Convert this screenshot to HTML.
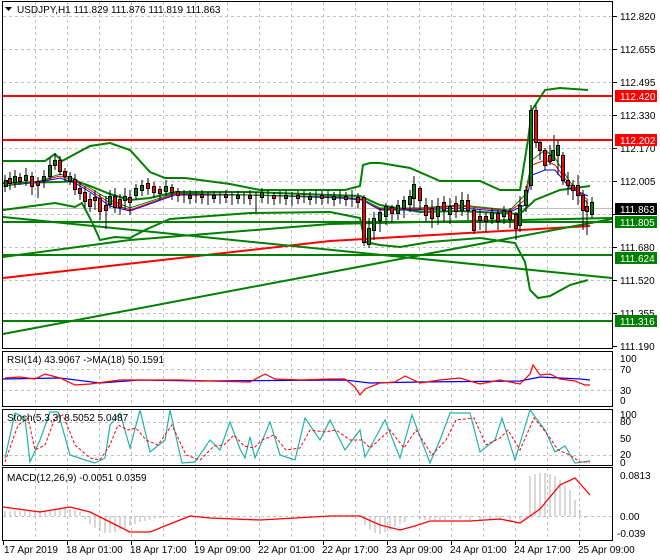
<!DOCTYPE html>
<html><head><meta charset="utf-8"><style>
html,body{margin:0;padding:0;background:#fff;}
svg{display:block;font-family:"Liberation Sans",sans-serif;}
</style></head><body>
<svg width="660" height="560" viewBox="0 0 660 560" xmlns="http://www.w3.org/2000/svg">
<rect width="660" height="560" fill="#fff"/>
<g fill="none" stroke="#000" stroke-width="1">
<rect x="2.5" y="1.5" width="610" height="347"/>
<rect x="2.5" y="351.5" width="610" height="55"/>
<rect x="2.5" y="409.5" width="610" height="56"/>
<rect x="2.5" y="467.5" width="610" height="73"/>
</g>
<g stroke="#c0c0c0" stroke-dasharray="3,3" stroke-width="1">
<path d="M35.5 2V348M67.5 2V348M99.5 2V348M131.5 2V348M163.5 2V348M195.5 2V348M227.5 2V348M259.5 2V348M291.5 2V348M323.5 2V348M355.5 2V348M387.5 2V348M419.5 2V348M451.5 2V348M483.5 2V348M515.5 2V348M547.5 2V348M579.5 2V348"/>
<path d="M3 16.5H612M3 49.5H612M3 82.5H612M3 115.5H612M3 148.5H612M3 181.5H612M3 214.5H612M3 247.5H612M3 280.5H612M3 313.5H612"/>
<path d="M35.5 352V406M67.5 352V406M99.5 352V406M131.5 352V406M163.5 352V406M195.5 352V406M227.5 352V406M259.5 352V406M291.5 352V406M323.5 352V406M355.5 352V406M387.5 352V406M419.5 352V406M451.5 352V406M483.5 352V406M515.5 352V406M547.5 352V406M579.5 352V406"/>
<path d="M3 369.5H612M3 390.5H612"/>
<path d="M35.5 410V465M67.5 410V465M99.5 410V465M131.5 410V465M163.5 410V465M195.5 410V465M227.5 410V465M259.5 410V465M291.5 410V465M323.5 410V465M355.5 410V465M387.5 410V465M419.5 410V465M451.5 410V465M483.5 410V465M515.5 410V465M547.5 410V465M579.5 410V465"/>
<path d="M3 422.5H612M3 455.5H612"/>
<path d="M35.5 468V540M67.5 468V540M99.5 468V540M131.5 468V540M163.5 468V540M195.5 468V540M227.5 468V540M259.5 468V540M291.5 468V540M323.5 468V540M355.5 468V540M387.5 468V540M419.5 468V540M451.5 468V540M483.5 468V540M515.5 468V540M547.5 468V540M579.5 468V540"/>
<path d="M3 516.5H612"/>
</g>
<path d="M3 208.5H612" stroke="#c0c0c0" stroke-width="1"/>
<g fill="none" stroke-width="2">
<path d="M3 96H612M3 140H612" stroke="#f00"/>
<path d="M3 278L330 241L590 226" stroke="#f00"/>
<path d="M3 255H612M3 321H612" stroke="#008000"/>
<path d="M3 222H612" stroke="#008000"/>
<path d="M3 217L612 278" stroke="#008000"/>
<path d="M3 334L612 219" stroke="#008000"/>
<path d="M3 257L130 240L330 224L612 218" stroke="#008000"/>
<path d="M3 161L45 161L55 154L62 161L90 146L110 143L130 150L150 172L165 178L185 178L230 184L260 190L290 190L345 190L360 186L363 165L370 163L380 163L410 168L440 181L480 181L500 190L520 190L528 140L532 110L545 90L560 88L588 90" stroke="#008000"/>
<path d="M3 183L60 182L75 181L90 186L110 194L130 200L150 198L175 192L250 192L330 195L360 196L380 205L420 212L460 211L500 213L520 214L535 200L560 190L590 186" stroke="#008000"/>
<path d="M3 210L40 205L55 203L75 207L82 203L92 222L100 240L115 237L130 238L145 230L170 219L250 213L330 212L360 218L365 242L380 245L400 247L430 242L480 238L515 243L525 262L530 290L538 298L550 296L570 285L588 280" stroke="#008000"/>
</g>
<g fill="none" stroke-width="1">
<path d="M3 186L40 182L60 178L75 183L90 192L110 206L130 211L175 195L250 195L340 198L362 200L380 210L420 210L460 208L510 212L525 205L532 175L545 170L555 170L570 188L588 196" stroke="#00f"/>
<path d="M3 186L40 181L60 176L75 181L90 190L110 203L130 210L175 194L250 195L340 197L362 199L380 209L420 209L460 206L510 211L525 200L532 165L545 160L555 165L570 185L588 200" stroke="#f00"/>
<path d="M3 186L40 181L60 174L75 179L90 188L110 200L130 208L175 193L250 195L340 197L362 199L380 208L420 208L460 205L510 210L525 195L532 160L545 150L555 158L570 182L588 204" stroke="#008000"/>
</g>
<g stroke="#000" stroke-width="1" fill="none">
<path d="M5 175V192M10 172V190M15 170V188M20 173V185M26 168V186M32 172V195M38 177V198M44 170V188M50 158V180M55 153V170M60 156V175M65 168V182M70 172V185M75 174V195M80 182V200M85 186V208M90 193V212M95 190V210M100 194V220M106 196V229M110 190V208M115 188V213M120 194V215M125 188V210M130 190V215M136 184V200M142 180V196M148 178V195M154 182V198M160 186V200M166 180V196M172 184V200M178 188V202M184 190V203M190 190V204M196 191V203M202 190V204M208 192V205M214 191V203M220 192V204M226 190V203M232 192V205M238 191V204M244 192V204M250 190V205M256 192V212M262 188V203M268 190V204M274 192V205M280 191V204M286 190V205M292 192V206M298 191V204M304 190V203M310 192V205M316 190V204M322 191V205M328 190V204M334 192V206M340 190V204M346 192V206M352 190V207M358 193V208M364 195V246M369 218V248M374 212V240M380 208V232M386 203V225M392 205V222M398 200V220M404 196V218M410 190V212M414 176V208M420 186V210M426 198V222M432 200V228M438 198V225M444 196V222M450 198V224M456 196V218M462 192V216M468 194V220M474 208V234M480 210V230M486 212V232M492 208V224M498 210V230M504 206V224M510 208V228M516 212V240M520 196V232M526 186V212M531 105V190M536 105V148M540 140V160M545 148V170M550 145V165M554 135V160M558 140V175M563 152V185M568 172V195M573 180V200M578 175V205M583 190V230M587 200V235M592 197V218"/>
</g>
<g stroke="#000" stroke-width="1">
<g fill="#008000">
<rect x="13.5" y="176.5" width="3" height="6"/><rect x="24.5" y="175.5" width="3" height="5"/><rect x="42.5" y="176.5" width="3" height="4"/><rect x="48.5" y="165.5" width="3" height="11"/><rect x="53.5" y="160.5" width="3" height="5"/><rect x="108.5" y="196.5" width="3" height="8"/><rect x="123.5" y="196.5" width="3" height="4"/><rect x="134.5" y="188.5" width="3" height="7"/><rect x="140.5" y="185.5" width="3" height="5"/><rect x="164.5" y="186.5" width="3" height="5"/><rect x="188.5" y="195.5" width="3" height="3"/><rect x="212.5" y="195.5" width="3" height="3"/><rect x="236.5" y="195.5" width="3" height="3"/><rect x="260.5" y="192.5" width="3" height="5"/><rect x="284.5" y="195.5" width="3" height="3"/><rect x="308.5" y="196.5" width="3" height="3"/><rect x="332.5" y="196.5" width="3" height="3"/><rect x="367.5" y="228.5" width="3" height="16"/><rect x="372.5" y="218.5" width="3" height="12"/><rect x="378.5" y="212.5" width="3" height="8"/><rect x="384.5" y="206.5" width="3" height="10"/><rect x="396.5" y="205.5" width="3" height="8"/><rect x="402.5" y="200.5" width="3" height="8"/><rect x="408.5" y="196.5" width="3" height="8"/><rect x="412.5" y="184.5" width="3" height="14"/><rect x="436.5" y="206.5" width="3" height="10"/><rect x="448.5" y="206.5" width="3" height="8"/><rect x="460.5" y="200.5" width="3" height="10"/><rect x="490.5" y="212.5" width="3" height="6"/><rect x="502.5" y="210.5" width="3" height="6"/><rect x="518.5" y="205.5" width="3" height="20"/><rect x="524.5" y="190.5" width="3" height="15"/><rect x="529.5" y="110.5" width="3" height="75"/><rect x="551.5" y="150.5" width="3" height="10"/><rect x="556.5" y="145.5" width="3" height="10"/><rect x="590.5" y="202.5" width="3" height="12"/><rect x="4.5" y="180.5" width="3" height="6"/><rect x="68.5" y="176.5" width="3" height="5"/>
</g>
<g fill="#f00">
<rect x="8.5" y="178.5" width="3" height="5"/><rect x="18.5" y="177.5" width="3" height="4"/><rect x="30.5" y="176.5" width="3" height="10"/><rect x="36.5" y="181.5" width="3" height="4"/><rect x="58.5" y="160.5" width="3" height="11"/><rect x="63.5" y="171.5" width="3" height="5"/><rect x="73.5" y="179.5" width="3" height="10"/><rect x="78.5" y="188.5" width="3" height="5"/><rect x="83.5" y="192.5" width="3" height="9"/><rect x="88.5" y="199.5" width="3" height="7"/><rect x="93.5" y="197.5" width="3" height="3"/><rect x="98.5" y="198.5" width="3" height="13"/><rect x="104.5" y="205.5" width="3" height="5"/><rect x="113.5" y="196.5" width="3" height="11"/><rect x="118.5" y="199.5" width="3" height="8"/><rect x="128.5" y="197.5" width="3" height="5"/><rect x="146.5" y="183.5" width="3" height="5"/><rect x="152.5" y="186.5" width="3" height="6"/><rect x="158.5" y="189.5" width="3" height="4"/><rect x="170.5" y="187.5" width="3" height="5"/><rect x="176.5" y="191.5" width="3" height="4"/><rect x="200.5" y="194.5" width="3" height="3"/><rect x="224.5" y="194.5" width="3" height="3"/><rect x="248.5" y="195.5" width="3" height="3"/><rect x="272.5" y="195.5" width="3" height="3"/><rect x="296.5" y="195.5" width="3" height="3"/><rect x="320.5" y="195.5" width="3" height="3"/><rect x="344.5" y="196.5" width="3" height="3"/><rect x="356.5" y="197.5" width="3" height="5"/><rect x="362.5" y="197.5" width="3" height="45"/><rect x="390.5" y="207.5" width="3" height="6"/><rect x="418.5" y="188.5" width="3" height="12"/><rect x="424.5" y="205.5" width="3" height="10"/><rect x="430.5" y="208.5" width="3" height="10"/><rect x="442.5" y="202.5" width="3" height="8"/><rect x="454.5" y="203.5" width="3" height="8"/><rect x="466.5" y="200.5" width="3" height="10"/><rect x="472.5" y="210.5" width="3" height="20"/><rect x="478.5" y="216.5" width="3" height="4"/><rect x="484.5" y="216.5" width="3" height="5"/><rect x="496.5" y="213.5" width="3" height="8"/><rect x="508.5" y="211.5" width="3" height="8"/><rect x="514.5" y="214.5" width="3" height="14"/><rect x="534.5" y="110.5" width="3" height="32"/><rect x="538.5" y="142.5" width="3" height="8"/><rect x="543.5" y="150.5" width="3" height="15"/><rect x="548.5" y="155.5" width="3" height="6"/><rect x="561.5" y="155.5" width="3" height="25"/><rect x="566.5" y="180.5" width="3" height="5"/><rect x="571.5" y="185.5" width="3" height="5"/><rect x="576.5" y="185.5" width="3" height="10"/><rect x="581.5" y="195.5" width="3" height="15"/><rect x="585.5" y="206.5" width="3" height="5"/>
</g>
</g>
<g stroke="#000" stroke-width="1"><path d="M613 16.5h4M613 49.5h4M613 82.5h4M613 115.5h4M613 148.5h4M613 181.5h4M613 214.5h4M613 247.5h4M613 280.5h4M613 313.5h4M613 346.5h4"/></g>
<g font-size="10" fill="#000">
<text x="620" y="20">112.820</text><text x="620" y="53">112.655</text><text x="620" y="86">112.495</text><text x="620" y="119">112.330</text><text x="620" y="152">112.170</text><text x="620" y="185">112.005</text><text x="620" y="251">111.680</text><text x="620" y="284">111.520</text><text x="620" y="317">111.355</text><text x="620" y="350">111.190</text>
</g>
<g font-size="10">
<rect x="615" y="90" width="42" height="12" fill="#f00"/><text x="620" y="100" fill="#fff">112.420</text>
<rect x="615" y="134" width="42" height="12" fill="#f00"/><text x="620" y="144" fill="#fff">112.202</text>
<rect x="615" y="203" width="42" height="12" fill="#000"/><text x="620" y="213" fill="#fff">111.863</text>
<rect x="615" y="216" width="42" height="12" fill="#008000"/><text x="620" y="226" fill="#fff">111.805</text>
<rect x="615" y="252" width="42" height="12" fill="#008000"/><text x="620" y="262" fill="#fff">111.624</text>
<rect x="615" y="315" width="42" height="12" fill="#008000"/><text x="620" y="325" fill="#fff">111.316</text>
</g>
<path d="M5 7h7l-3.5 4z" fill="#000"/>
<text x="17" y="13" font-size="10" fill="#000">USDJPY,H1  111.829 111.876 111.819 111.863</text>
<path d="M3 379L60 378L100 383L140 380L200 381L345 380L370 383L420 382L520 381L540 377L580 379L590 380" fill="none" stroke="#00f" stroke-width="1.2"/>
<path d="M5 378L20 377L35 379L45 374L60 378L75 385L90 384L105 382L120 380L160 380L180 380L210 381L250 382L265 374L275 379L300 380L330 379L345 379L355 387L360 395L365 389L380 383L395 382L405 376L420 383L440 380L460 378L480 384L500 380L520 384L530 374L533 365L540 375L550 374L560 379L575 381L585 385L590 385" fill="none" stroke="#f00" stroke-width="1.2"/>
<text x="7" y="363" font-size="10" fill="#000">RSI(14) 43.9067  -&gt;MA(18) 50.1591</text>
<g font-size="10" fill="#000"><text x="620" y="362">100</text><text x="620" y="373">70</text><text x="620" y="394">30</text><text x="620" y="404">0</text></g>
<path d="M5 458L15 413L25 418L30 462L40 440L50 412L58 412L70 455L85 460L95 463L105 458L110 425L120 413L130 448L140 410L150 452L165 440L170 410L182 463L195 462L210 440L220 450L230 422L240 449L245 458L250 437L255 458L270 422L280 455L295 460L305 418L320 440L330 420L345 450L360 430L365 457L385 420L400 458L412 415L430 463L440 440L450 413L470 413L480 452L495 440L502 418L515 460L530 410L545 430L555 452L565 446L575 463L590 461" fill="none" stroke="#20b2aa" stroke-width="1.2"/>
<path d="M5 462L18 425L28 418L35 450L45 445L55 418L63 415L75 445L90 458L100 460L110 445L118 425L128 430L136 428L146 440L158 445L172 425L186 455L200 460L214 446L224 445L234 435L244 446L254 448L262 440L274 435L286 450L300 448L310 430L325 432L336 430L350 440L362 440L370 448L390 430L404 448L416 430L432 455L446 440L456 420L474 418L486 445L500 438L508 430L520 450L534 418L548 435L558 450L570 455L580 462L590 462" fill="none" stroke="#f00" stroke-width="1" stroke-dasharray="3,2"/>
<text x="7" y="421" font-size="10" fill="#000">Stoch(5,3,3) 8.5052 5.0487</text>
<g font-size="10" fill="#000"><text x="620" y="418">100</text><text x="620" y="425">80</text><text x="620" y="442">50</text><text x="620" y="458">20</text><text x="620" y="466">0</text></g>
<g stroke="#b0b0b0" stroke-width="1">
<path d="M5 516V511M10 516V511M15 516V511M20 516V511M25 516V511M30 516V511M35 516V511M40 516V511M45 516V510M50 516V510M55 516V509M60 516V508M65 516V508M70 516V509M75 516V510M80 516V512M85 516V519M90 516V524M95 516V528M100 516V531M105 516V533M110 516V533M115 516V532M120 516V530M125 516V528M130 516V526M135 516V524M140 516V522M145 516V521M150 516V520M155 516V519M160 516V518M165 516V517M365 516V525M370 516V530M375 516V533M380 516V534M385 516V532M390 516V530M395 516V527M400 516V524M405 516V522M420 516V519M425 516V520M430 516V520M435 516V521M440 516V520M445 516V520M460 516V519M470 516V520M480 516V520M490 516V520M500 516V520M510 516V521M520 516V520M530 516V476M535 516V474M540 516V473M545 516V473M550 516V474M555 516V476M560 516V480M565 516V486M570 516V490M575 516V500M580 516V510M585 516V518"/>
</g>
<path d="M3 507L40 512L70 507L90 512L120 527L130 532L150 532L180 520L190 516L210 518L260 520L330 516L360 516L380 525L400 530L415 526L430 521L470 521L500 519L520 523L540 509L560 485L575 478L590 495" fill="none" stroke="#f00" stroke-width="1.3"/>
<text x="7" y="481" font-size="10" fill="#000">MACD(12,26,9) -0.0051 0.0359</text>
<g font-size="10" fill="#000"><text x="620" y="479">0.0813</text><text x="620" y="520">0.00</text><text x="617" y="537">-0.039</text></g>
<g stroke="#000"><path d="M3.5 541v4M67.5 541v4M131.5 541v4M195.5 541v4M259.5 541v4M323.5 541v4M387.5 541v4M451.5 541v4M515.5 541v4M579.5 541v4"/></g>
<g font-size="10" fill="#000">
<text x="4" y="553">17 Apr 2019</text><text x="66" y="553">18 Apr 01:00</text><text x="130" y="553">18 Apr 17:00</text><text x="194" y="553">19 Apr 09:00</text><text x="258" y="553">22 Apr 01:00</text><text x="322" y="553">22 Apr 17:00</text><text x="386" y="553">23 Apr 09:00</text><text x="450" y="553">24 Apr 01:00</text><text x="514" y="553">24 Apr 17:00</text><text x="578" y="553">25 Apr 09:00</text>
</g>
</svg>
</body></html>
